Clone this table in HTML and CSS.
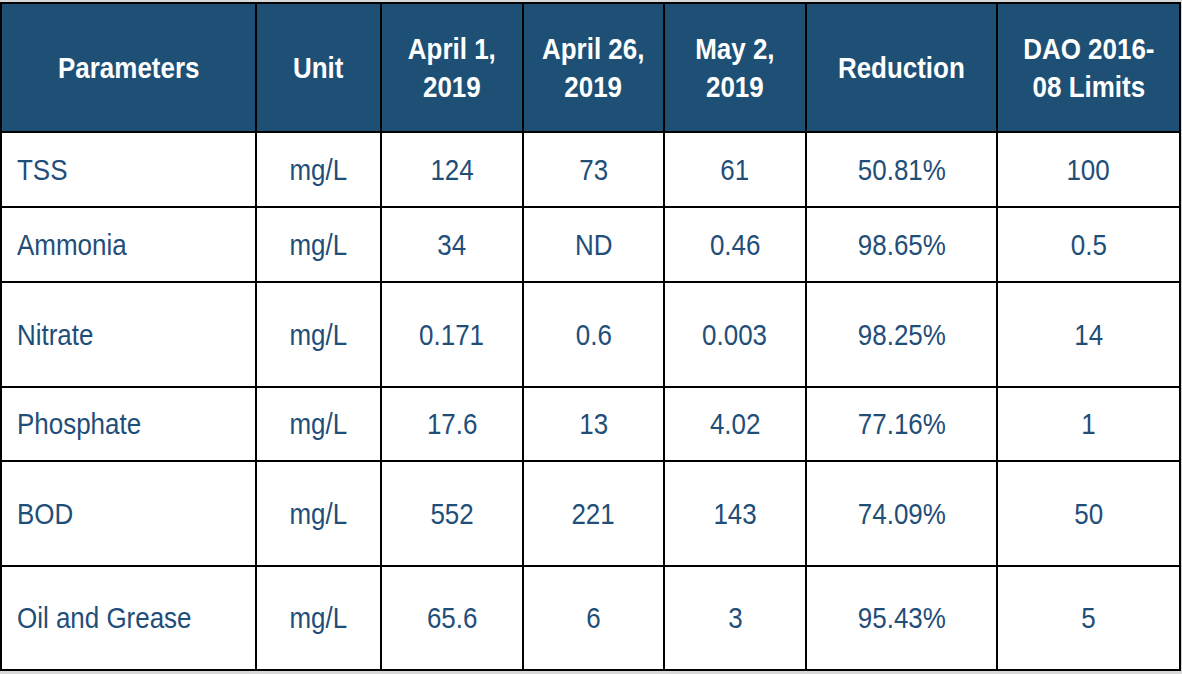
FILE: index.html
```html
<!DOCTYPE html>
<html lang="en">
<head>
<meta charset="utf-8">
<title>Water quality parameters</title>
<link rel="stylesheet" href="styles.css">
</head>
<body>
<table class="results">
  <colgroup>
    <col class="c-param">
    <col class="c-unit">
    <col class="c-d1">
    <col class="c-d2">
    <col class="c-d3">
    <col class="c-red">
    <col class="c-lim">
  </colgroup>
  <thead>
    <tr class="head-row">
      <th><span class="t">Parameters</span></th>
      <th><span class="t">Unit</span></th>
      <th><span class="t">April 1,<br>2019</span></th>
      <th><span class="t">April 26,<br>2019</span></th>
      <th><span class="t">May 2,<br>2019</span></th>
      <th><span class="t">Reduction</span></th>
      <th><span class="t">DAO 2016-<br>08 Limits</span></th>
    </tr>
  </thead>
  <tbody>
    <tr class="r-75">
      <td class="name"><span class="t">TSS</span></td>
      <td><span class="t">mg/L</span></td>
      <td><span class="t">124</span></td>
      <td><span class="t">73</span></td>
      <td><span class="t">61</span></td>
      <td><span class="t">50.81%</span></td>
      <td><span class="t">100</span></td>
    </tr>
    <tr class="r-75">
      <td class="name"><span class="t">Ammonia</span></td>
      <td><span class="t">mg/L</span></td>
      <td><span class="t">34</span></td>
      <td><span class="t">ND</span></td>
      <td><span class="t">0.46</span></td>
      <td><span class="t">98.65%</span></td>
      <td><span class="t">0.5</span></td>
    </tr>
    <tr class="r-105">
      <td class="name"><span class="t">Nitrate</span></td>
      <td><span class="t">mg/L</span></td>
      <td><span class="t">0.171</span></td>
      <td><span class="t">0.6</span></td>
      <td><span class="t">0.003</span></td>
      <td><span class="t">98.25%</span></td>
      <td><span class="t">14</span></td>
    </tr>
    <tr class="r-74">
      <td class="name"><span class="t">Phosphate</span></td>
      <td><span class="t">mg/L</span></td>
      <td><span class="t">17.6</span></td>
      <td><span class="t">13</span></td>
      <td><span class="t">4.02</span></td>
      <td><span class="t">77.16%</span></td>
      <td><span class="t">1</span></td>
    </tr>
    <tr class="r-105">
      <td class="name"><span class="t">BOD</span></td>
      <td><span class="t">mg/L</span></td>
      <td><span class="t">552</span></td>
      <td><span class="t">221</span></td>
      <td><span class="t">143</span></td>
      <td><span class="t">74.09%</span></td>
      <td><span class="t">50</span></td>
    </tr>
    <tr class="r-104">
      <td class="name"><span class="t">Oil and Grease</span></td>
      <td><span class="t">mg/L</span></td>
      <td><span class="t">65.6</span></td>
      <td><span class="t">6</span></td>
      <td><span class="t">3</span></td>
      <td><span class="t">95.43%</span></td>
      <td><span class="t">5</span></td>
    </tr>
  </tbody>
</table>
</body>
</html>
```
FILE: styles.css
```css
html, body {
  margin: 0;
  padding: 0;
}
body {
  background: #d8d8d8;
  padding-top: 2px;
  font-family: "Liberation Sans", Arial, sans-serif;
}
.results {
  border-collapse: collapse;
  table-layout: fixed;
  width: 1181px;
  background: #ffffff;
  border: 2px solid #000;
}
.c-param { width: 255px; }
.c-unit { width: 125px; }
.c-d1 { width: 142px; }
.c-d2 { width: 141px; }
.c-d3 { width: 142px; }
.c-red { width: 191px; }
.c-lim { width: 183px; }

.results th,
.results td {
  border: 2px solid #000;
  padding: 0;
  text-align: center;
  vertical-align: middle;
  overflow: visible;
  white-space: nowrap;
}
.results th {
  background: #1e5075;
  color: #ffffff;
  font-weight: bold;
  font-size: 30px;
  line-height: 38px;
}
.results td {
  color: #1f4e79;
  font-size: 30px;
  line-height: 34px;
}
.t {
  display: inline-block;
  transform: scaleX(0.865);
  transform-origin: center center;
}
.results td.name {
  text-align: left;
  padding-left: 15px;
}
.results td.name .t {
  transform-origin: left center;
}
.head-row { height: 129px; }
.r-75 { height: 75px; }
.r-74 { height: 74px; }
.r-105 { height: 105px; }
.r-104 { height: 104px; }
```
